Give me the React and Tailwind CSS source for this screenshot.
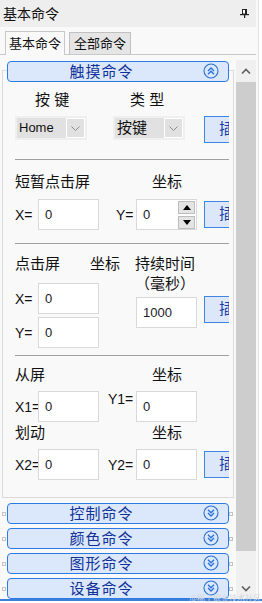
import React from "react";

function CircleChevrons({ up }) {
  return (
    <svg width="16" height="16" viewBox="0 0 16 16" fill="none">
      <circle cx="8" cy="8" r="7" stroke="#2a6fd6" strokeWidth="1.1" />
      {up ? (
        <g stroke="#2a6fd6" strokeWidth="1.3" fill="none">
          <polyline points="5,8 8,5 11,8" />
          <polyline points="5,11.2 8,8.2 11,11.2" />
        </g>
      ) : (
        <g stroke="#2a6fd6" strokeWidth="1.3" fill="none">
          <polyline points="5,4.8 8,7.8 11,4.8" />
          <polyline points="5,8 8,11 11,8" />
        </g>
      )}
    </svg>
  );
}

function Header({ label, up }) {
  return (
    <div className="relative h-[21px] w-[222px] rounded-[4px] border-[1.5px] border-[#2c7be5] bg-[#dbe8fb] flex items-center justify-center pr-[33px] text-[15px] leading-none text-[#10309a] tracking-[1px]">
      <span>{label}</span>
      <div className="absolute right-[9px] top-[1px]">
        <CircleChevrons up={up} />
      </div>
    </div>
  );
}

function Input({ value, spin }) {
  return (
    <div className="relative h-[31px] w-[61px] shrink-0 bg-white border border-[#d9d9d9] flex items-center pl-[6px] text-[13px] text-[#1a1a2a]">
      {value}
      {spin && (
        <div className="absolute right-[1px] top-[1px] flex flex-col gap-[2px]">
          <div className="h-[13px] w-[17px] bg-[#e4e4e4] border border-[#bdbdbd] flex items-center justify-center">
            <svg width="8" height="5" viewBox="0 0 8 5"><polygon points="0,5 8,5 4,0" fill="#000" /></svg>
          </div>
          <div className="h-[13px] w-[17px] bg-[#e4e4e4] border border-[#bdbdbd] flex items-center justify-center">
            <svg width="8" height="5" viewBox="0 0 8 5"><polygon points="0,0 8,0 4,5" fill="#000" /></svg>
          </div>
        </div>
      )}
    </div>
  );
}

function Btn() {
  return (
    <div className="h-[27px] w-[60px] shrink-0 bg-[#dce8fa] border border-[#3f86e0] flex items-center justify-center text-[15px] text-[#1a3ca8]">
      插入
    </div>
  );
}

function Combo({ text, small }) {
  return (
    <div className="h-[24px] w-[72px] shrink-0 bg-[#efefef] p-[2px] flex">
      <div className={"flex-1 bg-[#e1e1e1] flex items-center pl-[2px] text-[#111] " + (small ? "text-[13px]" : "text-[15px]")}>
        {text}
      </div>
      <div className="w-[19px] bg-[#e1e1e1] border border-white flex items-center justify-center">
        <svg width="9" height="5" viewBox="0 0 9 5" fill="none"><polyline points="0.5,0.5 4.5,4.5 8.5,0.5" stroke="#8a8a8a" strokeWidth="1" /></svg>
      </div>
    </div>
  );
}

function Sq() {
  return <div className="h-[4px] w-[4px] border border-[#c4c4c4] bg-[#f9f9f9] shrink-0" />;
}

function Lbl({ children, w, cls = "" }) {
  return (
    <span className={"shrink-0 text-[14px] leading-[16px] text-[#111] " + cls} style={{ width: w }}>
      {children}
    </span>
  );
}

export default function App() {
  return (
    <div className="relative w-[262px] h-[603px] overflow-hidden bg-white font-['Liberation_Sans','Noto_Sans_CJK_SC',sans-serif] text-[#111]">
      <div className="flex h-[599px]">
        <div className="w-[256px] flex flex-col bg-[#f9f9f9]">
          {/* title bar */}
          <div className="h-[27px] bg-[#eeeeee] flex items-center justify-between pl-[3px] pr-[7px]">
            <span className="text-[14px] leading-none text-[#111]">基本命令</span>
            <svg width="9" height="9" viewBox="0 0 9 9" fill="none">
              <rect x="2.5" y="0.5" width="4" height="4.5" stroke="#222" strokeWidth="1" fill="#fff" />
              <rect x="5" y="0.5" width="1.5" height="4.5" fill="#222" />
              <rect x="0" y="5" width="9" height="1.2" fill="#222" />
              <rect x="4" y="6" width="1.2" height="3" fill="#222" />
            </svg>
          </div>
          {/* tabs */}
          <div className="h-[28px] flex items-end pl-[5px] border-b border-[#c8c8c8]">
            <div className="h-[24px] w-[60px] -mb-[1px] bg-[#f9f9f9] border border-b-0 border-[#c8c8c8] flex items-center justify-center text-[13px] leading-none">
              基本命令
            </div>
            <div className="h-[22px] w-[62px] ml-[4px] bg-[#e5e5e5] border border-b-0 border-[#c0c0c0] flex items-center justify-center text-[13px] leading-none">
              全部命令
            </div>
          </div>
          {/* body */}
          <div className="flex-1 flex pt-[5px]">
            <div className="w-[236px] flex flex-col pt-[1px]">
              <div className="relative z-10 ml-[7px]">
                <Header label="触摸命令" up />
              </div>
              <div className="-mt-[12px] ml-[2px] w-[232px] h-[428px] border border-[#dadada]">
                <div className="w-[226px] h-full overflow-hidden pl-[12px] flex flex-col">
                  {/* section 1 */}
                  <div className="mt-[21px] flex pl-[20px]">
                    <Lbl w={95} cls="text-[15px]">按 键</Lbl>
                    <Lbl w={60} cls="text-[15px]">类 型</Lbl>
                  </div>
                  <div className="mt-[8px] flex items-start">
                    <Combo text="Home" small />
                    <div className="w-[26px] shrink-0" />
                    <Combo text="按键" />
                    <div className="w-[19px] shrink-0" />
                    <Btn />
                  </div>
                  <div className="mt-[16px] border-t border-[#a0a0a0] w-[214px] shrink-0" />
                  {/* section 2 */}
                  <div className="mt-[14px] flex">
                    <Lbl w={137} cls="text-[15px]">短暂点击屏</Lbl>
                    <Lbl w={40} cls="text-[15px]">坐标</Lbl>
                  </div>
                  <div className="mt-[9px] flex items-center">
                    <Lbl w={23}>X=</Lbl>
                    <Input value="0" />
                    <div className="w-[17px] shrink-0" />
                    <Lbl w={20}>Y=</Lbl>
                    <Input value="0" spin />
                    <div className="w-[7px] shrink-0" />
                    <Btn />
                  </div>
                  <div className="mt-[13px] border-t border-[#a0a0a0] w-[214px] shrink-0" />
                  {/* section 3 */}
                  <div className="mt-[12px] flex items-start">
                    <div className="w-[120px] shrink-0 flex flex-col">
                      <div className="flex">
                        <Lbl w={75} cls="text-[15px]">点击屏</Lbl>
                        <Lbl w={40} cls="text-[15px]">坐标</Lbl>
                      </div>
                      <div className="mt-[11px] flex items-center">
                        <Lbl w={23}>X=</Lbl>
                        <Input value="0" />
                      </div>
                      <div className="mt-[3px] flex items-center">
                        <Lbl w={23}>Y=</Lbl>
                        <Input value="0" />
                      </div>
                    </div>
                    <div className="w-[69px] shrink-0 flex flex-col">
                      <Lbl w={69} cls="text-[15px]">持续时间</Lbl>
                      <Lbl w={69} cls="text-[15px] mt-[4px]">（毫秒）</Lbl>
                      <div className="mt-[5px] ml-[1px]">
                        <Input value="1000" />
                      </div>
                    </div>
                    <div className="mt-[40px]">
                      <Btn />
                    </div>
                  </div>
                  <div className="mt-[7px] border-t border-[#a0a0a0] w-[214px] shrink-0" />
                  {/* section 4 */}
                  <div className="mt-[11px] flex">
                    <Lbl w={137} cls="text-[15px]">从屏</Lbl>
                    <Lbl w={40} cls="text-[15px]">坐标</Lbl>
                  </div>
                  <div className="mt-[8px] flex items-center">
                    <Lbl w={23}>X1=</Lbl>
                    <Input value="0" />
                    <div className="w-[9px] shrink-0" />
                    <Lbl w={28} cls="self-start mt-[0px]">Y1=</Lbl>
                    <Input value="0" />
                  </div>
                  <div className="mt-[3px] flex">
                    <Lbl w={137} cls="text-[15px]">划动</Lbl>
                    <Lbl w={40} cls="text-[15px]">坐标</Lbl>
                  </div>
                  <div className="mt-[8px] flex items-center">
                    <Lbl w={23}>X2=</Lbl>
                    <Input value="0" />
                    <div className="w-[9px] shrink-0" />
                    <Lbl w={28}>Y2=</Lbl>
                    <Input value="0" />
                    <div className="w-[7px] shrink-0" />
                    <Btn />
                  </div>
                </div>
              </div>
              <div className="mt-[5px] flex flex-col gap-[4px]">
                {["控制命令", "颜色命令", "图形命令", "设备命令"].map((t) => (
                  <div key={t} className="flex items-center pl-[2px]">
                    <Sq />
                    <div className="w-[1px] shrink-0" />
                    <Header label={t} />
                    <Sq />
                  </div>
                ))}
              </div>
            </div>
            {/* scrollbar */}
            <div className="w-[20px] bg-[#f0f0f0] flex flex-col">
              <div className="h-[21px] flex items-center justify-center">
                <svg width="10" height="6" viewBox="0 0 10 6" fill="none"><polyline points="1,5.5 5,1.5 9,5.5" stroke="#606060" strokeWidth="1.6" /></svg>
              </div>
              <div className="h-[469px] mt-[1px] bg-[#cdcdcd]" />
              <div className="flex-1 flex items-end justify-center pb-[7px]">
                <svg width="10" height="6" viewBox="0 0 10 6" fill="none"><polyline points="1,0.5 5,4.5 9,0.5" stroke="#606060" strokeWidth="1.6" /></svg>
              </div>
            </div>
          </div>
        </div>
        <div className="w-[6px] bg-white flex">
          <div className="w-[2px] bg-[#f9f9f9]" />
          <div className="w-[1px] bg-[#e2e2e2]" />
        </div>
      </div>
      <div className="h-[2px] bg-[#3b7fd9]" />
      <div className="absolute right-[1px] bottom-[1px] text-[8px] leading-none text-[#d4d8e0] font-['Noto_Sans_CJK_SC',sans-serif]">@稀土掘金技术社区</div>
    </div>
  );
}
